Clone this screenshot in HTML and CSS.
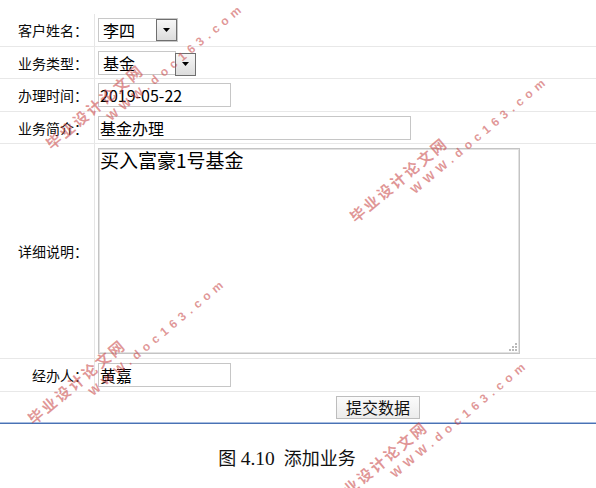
FILE: index.html
```html
<!DOCTYPE html>
<html lang="zh-CN">
<head>
<meta charset="utf-8">
<title>添加业务</title>
<link rel="stylesheet" href="styles.css">
</head>
<body>
<div class="page">
  <form class="form">
    <div class="row">
      <div class="label">客户姓名：</div>
      <div class="field">
        <div class="select">
          <span class="select-value">李四</span>
          <span class="select-btn"><svg width="7" height="4" viewBox="0 0 7 4"><path d="M0 0H7L3.5 4Z"/></svg></span>
        </div>
      </div>
    </div>
    <div class="row row--s">
      <div class="label">业务类型：</div>
      <div class="field">
        <div class="select select--split">
          <span class="select-value">基金</span>
          <span class="select-btn"><svg width="7" height="4" viewBox="0 0 7 4"><path d="M0 0H7L3.5 4Z"/></svg></span>
        </div>
      </div>
    </div>
    <div class="row">
      <div class="label">办理时间：</div>
      <div class="field"><input class="input input--short" type="text" value="2019-05-22"></div>
    </div>
    <div class="row row--s">
      <div class="label">业务简介：</div>
      <div class="field"><input class="input input--long" type="text" value="基金办理"></div>
    </div>
    <div class="row row--tall">
      <div class="label">详细说明：</div>
      <div class="field">
        <div class="textarea-wrap">
          <textarea class="textarea">买入富豪1号基金</textarea>
          <svg class="grip" width="9" height="9" viewBox="0 0 9 9"><g fill="#b9b9b9"><rect x="7" y="1" width="2" height="2"/><rect x="4" y="4" width="2" height="2"/><rect x="7" y="4" width="2" height="2"/><rect x="1" y="7" width="2" height="2"/><rect x="4" y="7" width="2" height="2"/><rect x="7" y="7" width="2" height="2"/></g></svg>
        </div>
      </div>
    </div>
    <div class="row">
      <div class="label">经办人：</div>
      <div class="field"><input class="input input--short" type="text" value="黄嘉"></div>
    </div>
    <div class="row-submit">
      <button class="submit" type="button">提交数据</button>
    </div>
  </form>
  <div class="rule"></div>
  <p class="caption">图 <span class="caption-num">4.10</span>&nbsp;&nbsp;添加业务</p>

  <div class="wm wm-a"><span class="wm-cn">毕业设计论文网</span><span class="wm-url">WWW.doc163.com</span></div>
  <div class="wm wm-b"><span class="wm-cn">毕业设计论文网</span><span class="wm-url">WWW.doc163.com</span></div>
  <div class="wm wm-c"><span class="wm-cn">毕业设计论文网</span><span class="wm-url">WWW.doc163.com</span></div>
  <div class="wm wm-d"><span class="wm-cn">毕业设计论文网</span><span class="wm-url">WWW.doc163.com</span></div>
</div>
</body>
</html>
```

FILE: styles.css
```css
html, body {
  margin: 0;
  padding: 0;
  background: #fff;
}

body {
  font-family: "Noto Sans CJK SC", "Noto Sans", sans-serif;
  color: #000;
}

.page {
  position: relative;
  width: 596px;
  height: 488px;
  overflow: hidden;
  padding-top: 14px;
  box-sizing: border-box;
}

.form {
  margin: 0;
}

.row {
  display: grid;
  grid-template-columns: 95px 1fr;
  height: 33px;
  box-sizing: border-box;
  border-bottom: 1px solid #e8e8e8;
}

.row--s {
  height: 32px;
}

.row--tall {
  height: 215px;
}

.label {
  display: flex;
  align-items: center;
  justify-content: flex-end;
  padding-right: 6px;
  border-right: 1px solid #e6e6e6;
  font-size: 14px;
  color: #0a0a0a;
  white-space: nowrap;
}

.field {
  display: flex;
  align-items: center;
  padding-left: 3px;
}

.select {
  display: flex;
  align-items: center;
  width: 80px;
  height: 24px;
  box-sizing: border-box;
  border: 1px solid #c8c8c8;
  font-size: 16px;
  background: #fff;
}

.select-value {
  flex: 1;
  padding-left: 4px;
  line-height: 22px;
}

.select-btn {
  display: flex;
  align-items: center;
  justify-content: center;
  width: 21px;
  height: 22px;
  box-sizing: border-box;
  border: 1px solid #6f6f6f;
  background: linear-gradient(#f7f7f7, #dcdcdc);
  flex: none;
}

.select-btn svg {
  fill: #000;
}

.select--split {
  width: 78px;
  align-items: flex-start;
}

.select--split .select-value {
  flex: none;
  width: 76px;
  box-sizing: border-box;
}

.select--split .select-btn {
  height: 23px;
  margin-top: 1px;
}

.input {
  box-sizing: border-box;
  height: 24px;
  margin: 0;
  border: 1px solid #c6c6c6;
  padding: 0 1px;
  font-family: "Noto Sans CJK SC", "Noto Sans", sans-serif;
  font-size: 16px;
  color: #000;
  background: #fff;
  outline: none;
}

.input--short {
  width: 133px;
}

.input--long {
  width: 313px;
}

.textarea-wrap {
  position: relative;
  width: 422px;
  height: 206px;
}

.textarea {
  display: block;
  width: 100%;
  height: 100%;
  box-sizing: border-box;
  margin: 0;
  border: 1px solid #c4c4c4;
  box-shadow: inset 0 0 0 1px #e2e2e2;
  padding: 0 1px;
  font-family: "Noto Sans CJK SC", "Noto Sans", sans-serif;
  font-size: 19px;
  line-height: 22px;
  color: #000;
  resize: none;
  outline: none;
  overflow: hidden;
}

.grip {
  position: absolute;
  right: 3px;
  bottom: 3px;
}

.row-submit {
  display: flex;
  align-items: center;
  height: 30px;
  padding-left: 336px;
}

.submit {
  width: 84px;
  height: 23px;
  margin: 0;
  padding: 0;
  border: 1px solid #bdbdbd;
  background: linear-gradient(#fbfbfb, #ececec);
  font-family: "Noto Sans CJK SC", "Noto Sans", sans-serif;
  font-size: 16px;
  line-height: 21px;
  color: #111;
}

.rule {
  height: 1px;
  border-top: 1px solid #a8bde0;
  background: #4a72b4;
}

.caption {
  margin: 23px 0 0;
  padding-right: 22px;
  text-align: center;
  font-family: "Liberation Serif", "Noto Sans CJK SC", serif;
  font-size: 18px;
  line-height: 24px;
  color: #111;
}

.caption-num {
  font-size: 19.5px;
}

.wm {
  position: absolute;
  transform: rotate(-40deg);
  transform-origin: 0 0;
  color: rgba(200, 70, 70, 0.56);
  pointer-events: none;
  white-space: nowrap;
}

.wm-cn {
  display: block;
  font-family: "Noto Sans CJK SC", sans-serif;
  font-weight: bold;
  font-size: 15px;
  line-height: 18px;
  letter-spacing: 2.5px;
}

.wm-url {
  display: block;
  margin-top: 1px;
  margin-left: 64px;
  font-family: "Liberation Sans", sans-serif;
  font-weight: bold;
  font-size: 12px;
  line-height: 17px;
  letter-spacing: 5px;
}

.wm-a { left: 42px; top: 139px; }
.wm-b { left: 346px; top: 212px; }
.wm-c { left: 24px; top: 414px; }
.wm-d { left: 326px; top: 496px; }
```
